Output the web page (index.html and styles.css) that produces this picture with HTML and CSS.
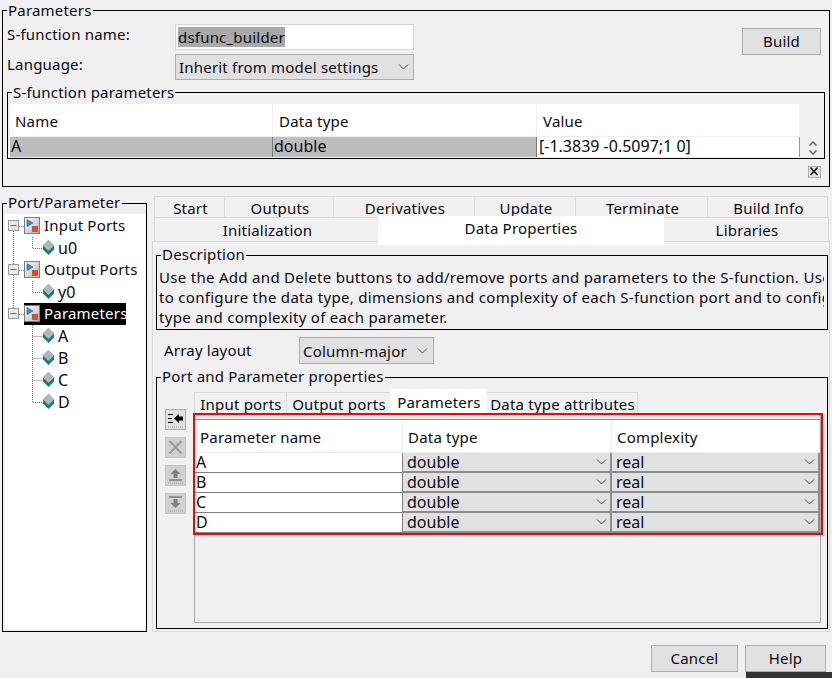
FILE: index.html
```html
<!DOCTYPE html>
<html lang="en">
<head>
<meta charset="utf-8">
<title>S-Function Builder</title>
<link rel="stylesheet" href="styles.css">
</head>
<body>
<svg class="defs" width="0" height="0" aria-hidden="true">
  <defs>
    <linearGradient id="boxfill" x1="0" y1="0" x2="1" y2="1"><stop offset="0" stop-color="#fff"/><stop offset="1" stop-color="#b4b4b4"/></linearGradient>
    <symbol id="expander" viewBox="0 0 19 22">
      <rect x="3.5" y="5.5" width="10" height="10" fill="#e9e9ec" stroke="#9a9a9a"/>
      <path d="M5.5 10.5h6" stroke="#4a6aa8" stroke-width="1"/>
      <path d="M14 11.5h5" stroke="#777" stroke-dasharray="1 1"/>
    </symbol>
    <symbol id="block" viewBox="0 0 16 18">
      <rect x=".5" y=".5" width="15" height="16" fill="url(#boxfill)" stroke="#7c7c7c"/>
      <path d="M3 2.500l6 3.500-6 3.500z" fill="#3b8fd6" stroke="#1d5f9c" stroke-width=".6"/>
      <rect x="8.500" y="9.500" width="5" height="5" fill="#e0501c" stroke="#a83a10" stroke-width=".6"/>
    </symbol>
    <symbol id="diamond" viewBox="0 0 11 15">
      <path d="M5.5 0L11 5.500V9.500L5.500 15L0 9.500V5.500z" fill="#0f8082"/>
      <path d="M5.500 0L11 5.500L5.500 11L0 5.500z" fill="#b5b5b5"/>
    </symbol>
  </defs>
</svg>

<fieldset class="group group-params">
  <legend class="group-title">Parameters</legend>
  <div class="form-grid">
    <span class="form-label form-label-name">S-function name:</span>
    <div class="text-field"><span class="selected-text">dsfunc_builder</span></div>
    <button class="btn btn-build">Build</button>
    <span class="form-label form-label-lang">Language:</span>
    <div class="combo combo-lang"><span>Inherit from model settings</span>
      <svg class="chev" width="11" height="6" viewBox="0 0 11 6"><path d="M1 .5l4.500 4.500L10 .5" fill="none" stroke="#555"/></svg>
    </div>
  </div>
  <fieldset class="group group-sfp">
    <legend class="group-title">S-function parameters</legend>
    <div class="sfp-table">
      <div class="sfp-head">Name</div>
      <div class="sfp-head">Data type</div>
      <div class="sfp-head">Value</div>
      <div class="sfp-spacer"></div>
      <div class="sfp-cell sfp-sel">A</div>
      <div class="sfp-cell sfp-sel">double</div>
      <div class="sfp-cell sfp-val">[-1.3839 -0.5097;1 0]</div>
      <div class="sfp-spin">
        <svg width="10" height="16" viewBox="0 0 10 16"><path d="M1.500 5.500L5 2l3.500 3.500M1.500 10.500L5 14l3.500-3.500" fill="none" stroke="#666" stroke-width="1.500"/></svg>
      </div>
    </div>
  </fieldset>
  <div class="close-row">
    <span class="close-box"><svg width="12" height="11" viewBox="0 0 12 11"><path d="M2.500 1.500l7 7.500M9.500 1.500l-7 7.500" stroke="#000" stroke-width="1.400"/></svg></span>
  </div>
</fieldset>

<main class="main">
  <fieldset class="group group-tree">
    <legend class="group-title">Port/Parameter</legend>
    <div class="tree">
      <div class="tree-row">
        <svg class="gutter" width="19" height="22"><path d="M8.500 16V22" stroke="#777" stroke-dasharray="1 1"/><use href="#expander" width="19" height="22"/></svg>
        <span class="node"><svg class="node-ico" width="16" height="18"><use href="#block"/></svg><span class="node-text">Input Ports</span></span>
      </div>
      <div class="tree-row">
        <svg class="gutter-child" width="53" height="22"><path d="M8.500 0V22M27.500 0V11.500H38" fill="none" stroke="#777" stroke-dasharray="1 1"/><use href="#diamond" x="38" y="3" width="11" height="15"/></svg>
        <span class="leaf-text">u0</span>
      </div>
      <div class="tree-row">
        <svg class="gutter" width="19" height="22"><path d="M8.500 0V5M8.500 16V22" stroke="#777" stroke-dasharray="1 1"/><use href="#expander" width="19" height="22"/></svg>
        <span class="node"><svg class="node-ico" width="16" height="18"><use href="#block"/></svg><span class="node-text">Output Ports</span></span>
      </div>
      <div class="tree-row">
        <svg class="gutter-child" width="53" height="22"><path d="M8.500 0V22M27.500 0V11.500H38" fill="none" stroke="#777" stroke-dasharray="1 1"/><use href="#diamond" x="38" y="3" width="11" height="15"/></svg>
        <span class="leaf-text">y0</span>
      </div>
      <div class="tree-row">
        <svg class="gutter" width="19" height="22"><path d="M8.500 0V5" stroke="#777" stroke-dasharray="1 1"/><use href="#expander" width="19" height="22"/></svg>
        <span class="node node-selected"><svg class="node-ico" width="16" height="18"><use href="#block"/></svg><span class="node-text">Parameters</span></span>
      </div>
      <div class="tree-row">
        <svg class="gutter-child" width="53" height="22"><path d="M27.500 0V22M27.500 11.500H38" fill="none" stroke="#777" stroke-dasharray="1 1"/><use href="#diamond" x="38" y="3" width="11" height="15"/></svg>
        <span class="leaf-text">A</span>
      </div>
      <div class="tree-row">
        <svg class="gutter-child" width="53" height="22"><path d="M27.500 0V22M27.500 11.500H38" fill="none" stroke="#777" stroke-dasharray="1 1"/><use href="#diamond" x="38" y="3" width="11" height="15"/></svg>
        <span class="leaf-text">B</span>
      </div>
      <div class="tree-row">
        <svg class="gutter-child" width="53" height="22"><path d="M27.500 0V22M27.500 11.500H38" fill="none" stroke="#777" stroke-dasharray="1 1"/><use href="#diamond" x="38" y="3" width="11" height="15"/></svg>
        <span class="leaf-text">C</span>
      </div>
      <div class="tree-row">
        <svg class="gutter-child" width="53" height="22"><path d="M27.500 0V11.500H38" fill="none" stroke="#777" stroke-dasharray="1 1"/><use href="#diamond" x="38" y="3" width="11" height="15"/></svg>
        <span class="leaf-text">D</span>
      </div>
    </div>
  </fieldset>

  <section class="tabs-area">
    <div class="tab-row tab-row-top">
      <div class="tab tab-start">Start</div>
      <div class="tab tab-outputs">Outputs</div>
      <div class="tab tab-deriv">Derivatives</div>
      <div class="tab tab-update">Update</div>
      <div class="tab tab-term">Terminate</div>
      <div class="tab tab-info">Build Info</div>
    </div>
    <div class="tab-row tab-row-bottom">
      <div class="tab tab-init">Initialization</div>
      <div class="tab tab-data tab-active">Data Properties</div>
      <div class="tab tab-libs">Libraries</div>
    </div>
    <div class="tab-panel">
      <fieldset class="group group-desc">
        <legend class="group-title">Description</legend>
        <div class="desc-text">
          <div>Use the Add and Delete buttons to add/remove ports and parameters to the S-function. Use the table</div>
          <div>to configure the data type, dimensions and complexity of each S-function port and to configure the data</div>
          <div>type and complexity of each parameter.</div>
        </div>
      </fieldset>
      <div class="array-row">
        <span class="array-label">Array layout</span>
        <div class="combo combo-array"><span>Column-major</span>
          <svg class="chev" width="11" height="6" viewBox="0 0 11 6"><path d="M1 .5l4.500 4.500L10 .5" fill="none" stroke="#555"/></svg>
        </div>
      </div>
      <fieldset class="group group-ports">
        <legend class="group-title">Port and Parameter properties</legend>
        <div class="ports-body">
          <div class="tool-col">
            <span class="tool tool-on"><svg width="19" height="19" viewBox="0 0 19 19"><path d="M2 4.500h5M2 8.500h4M2 12.500h5" stroke="#000" stroke-width="1.200"/><path d="M8 8.500l5-4.500v2.500h4v4h-4v2.500z" fill="#000"/><path d="M2 17h15" stroke="#999" stroke-dasharray="1 1"/></svg></span>
            <span class="tool"><svg width="19" height="19" viewBox="0 0 19 19"><path d="M3.500 3l12 12.500M15.500 3l-12 12.500" stroke="#9a9a9a" stroke-width="2"/></svg></span>
            <span class="tool"><svg width="19" height="19" viewBox="0 0 19 19"><path d="M9.500 3l5 5h-3v4h-4V8h-3z" fill="#7f7f7f"/><path d="M3 14h13" stroke="#7f7f7f" stroke-width="1.500"/><path d="M2 17h15" stroke="#a0a0a0" stroke-dasharray="1 1"/></svg></span>
            <span class="tool"><svg width="19" height="19" viewBox="0 0 19 19"><path d="M3 3h13" stroke="#7f7f7f" stroke-width="1.500"/><path d="M7.500 5h4v4h3l-5 5-5-5h3z" fill="#7f7f7f"/><path d="M2 17h15" stroke="#a0a0a0" stroke-dasharray="1 1"/></svg></span>
          </div>
          <div class="ports-main">
            <div class="sub-tabs">
              <div class="sub-tab sub-input">Input ports</div>
              <div class="sub-tab sub-output">Output ports</div>
              <div class="sub-tab sub-param sub-active">Parameters</div>
              <div class="sub-tab sub-attr">Data type attributes</div>
            </div>
            <div class="sub-panel">
              <div class="param-table">
                <div class="param-head">Parameter name</div>
                <div class="param-head">Data type</div>
                <div class="param-head">Complexity</div>

                <div class="param-name">A</div>
                <div class="param-combo"><span>double</span><svg class="chev" width="11" height="6" viewBox="0 0 11 6"><path d="M1 .5l4.500 4.500L10 .5" fill="none" stroke="#555"/></svg></div>
                <div class="param-combo"><span>real</span><svg class="chev" width="11" height="6" viewBox="0 0 11 6"><path d="M1 .5l4.500 4.500L10 .5" fill="none" stroke="#555"/></svg></div>

                <div class="param-name">B</div>
                <div class="param-combo"><span>double</span><svg class="chev" width="11" height="6" viewBox="0 0 11 6"><path d="M1 .5l4.500 4.500L10 .5" fill="none" stroke="#555"/></svg></div>
                <div class="param-combo"><span>real</span><svg class="chev" width="11" height="6" viewBox="0 0 11 6"><path d="M1 .5l4.500 4.500L10 .5" fill="none" stroke="#555"/></svg></div>

                <div class="param-name">C</div>
                <div class="param-combo"><span>double</span><svg class="chev" width="11" height="6" viewBox="0 0 11 6"><path d="M1 .5l4.500 4.500L10 .5" fill="none" stroke="#555"/></svg></div>
                <div class="param-combo"><span>real</span><svg class="chev" width="11" height="6" viewBox="0 0 11 6"><path d="M1 .5l4.500 4.500L10 .5" fill="none" stroke="#555"/></svg></div>

                <div class="param-name">D</div>
                <div class="param-combo"><span>double</span><svg class="chev" width="11" height="6" viewBox="0 0 11 6"><path d="M1 .5l4.500 4.500L10 .5" fill="none" stroke="#555"/></svg></div>
                <div class="param-combo"><span>real</span><svg class="chev" width="11" height="6" viewBox="0 0 11 6"><path d="M1 .5l4.500 4.500L10 .5" fill="none" stroke="#555"/></svg></div>
              </div>
              <div class="red-mark"></div>
            </div>
          </div>
        </div>
      </fieldset>
    </div>
  </section>
</main>

<footer class="footer">
  <button class="btn btn-cancel">Cancel</button>
  <button class="btn btn-help">Help</button>
</footer>
<div class="taskbar-sliver"></div>
</body>
</html>
```
FILE: styles.css
```css
* { box-sizing: border-box; }
html, body { margin: 0; padding: 0; }
body {
  width: 832px; height: 678px; overflow: hidden;
  background: #f0f0f0; color: #0a0a14;
  font: 15px/20px "Noto Sans", "Open Sans", sans-serif;
  letter-spacing: .2px;
}
.defs { position: absolute; }

.group { margin: 0; padding: 0; border: 1px solid #000; min-width: 0; }
.group-title { padding: 0 1px; margin-left: 4px; height: 20px; line-height: 20px; }
.group-tree .group-title, .group-desc .group-title, .group-ports .group-title { line-height: 18px; }

/* Parameters */
.group-params { margin: 0 2px; height: 187px; }
.form-grid {
  display: grid;
  grid-template-columns: 172px 239px 1fr;
  grid-template-rows: 26px 26px;
  row-gap: 4px;
  margin-top: 4px;
}
.form-label { padding-left: 4px; align-self: start; }
.text-field { background: #fff; border: 1px solid #d4d4d4; padding: 2px; height: 26px; }
.selected-text { display: inline-block; background: #a9a9a9; height: 20px; line-height: 20px; }
.btn {
  font: inherit; letter-spacing: inherit; color: inherit; background: #e1e1e1; border: 1px solid #adadad;
  padding: 0 0 2px; height: 27px;
}
.btn-build { grid-column: 3; grid-row: 1 / span 2; width: 79px; justify-self: end; align-self: start; margin: 4px 8px 0 0; }
.combo {
  display: flex; align-items: center; justify-content: space-between;
  background: #e1e1e1; border: 1px solid #adadad;
}
.combo-lang { height: 26px; padding: 0 4px 0 3px; grid-column: 2; }
.chev { flex: none; }

.group-sfp { margin: 2px 4px 0; height: 77px; }
.sfp-table {
  display: grid;
  grid-template-columns: 263px 264px 262px 1fr;
  grid-template-rows: 32px 20px;
  margin: 2px 0 0 2px;
}
.sfp-head { background: #fff; padding: 7px 0 0 5px; border-right: 1px solid #efefef; border-bottom: 1px solid #efefef; height: 33px; }
.sfp-spacer { height: 33px; }
.sfp-head:nth-child(2), .sfp-head:nth-child(3) { padding-left: 6px; }
.sfp-head:nth-child(3) { border-right: 0; }
.sfp-cell { height: 20px; margin-top: 1px; font-size: 16px; letter-spacing: 0; line-height: 18px; padding-left: 1px; border-right: 1px solid #787878; }
.sfp-sel { background: #bdbdbd; }
.sfp-val { background: #fff; border-right-color: #9a9a9a; width: 263px; padding-left: 2px; }
.sfp-spin { margin: 4px 0 0 9px; }
.sfp-spin svg { display: block; }

.close-row { display: flex; justify-content: flex-end; margin: 7px 8px 0 0; }
.close-box { display: block; width: 13px; height: 12px; background: #e1e1e1; border: 1px solid #adadad; line-height: 0; }
.close-box svg { margin: -1px 0 0 -1px; }

/* Main split */
.main { display: flex; gap: 5px; margin: 6px 2px 0; }
.group-tree { flex: none; width: 145px; height: 439px; }
.tree { margin: 1px 1px 2px 2px; height: 415px; background: #fff; padding-top: 1px; }
.tree-row { display: flex; height: 22px; align-items: center; }
.gutter, .gutter-child { flex: none; }
.node { display: flex; align-items: center; height: 22px; }
.node-ico { flex: none; }
.node-text { margin-left: 4px; padding-bottom: 2px; }
.node-selected { background: #000; color: #fff; width: 102px; }
.leaf-text { font-size: 16px; letter-spacing: 0; }

/* Tabs */
.tabs-area { flex: none; width: 678px; margin-top: 3px; }
.tab-row { display: flex; margin-left: 2px; width: 674px; }
.tab { border: 1px solid #dadada; border-bottom: 0; text-align: center; background: #f0f0f0; margin-right: -1px; }
.tab-row-top { height: 21px; }
.tab-row-top .tab { height: 21px; line-height: 22px; overflow: hidden; padding-left: 2px; }
.tab-row-bottom { height: 24px; }
.tab-row-bottom .tab { height: 24px; line-height: 24px; border-top: 1px solid #dadada; padding-left: 2px; }
.tab-start { width: 71px; } .tab-outputs { width: 110px; } .tab-deriv { width: 142px; }
.tab-update { width: 102px; } .tab-term { width: 133px; } .tab-info { width: 121px; }
.tab-init { width: 225px; } .tab-data { width: 286px; } .tab-libs { width: 166px; }
.tab-row-bottom .tab-active {
  position: relative; z-index: 1;
  height: 29px; margin-top: -1px; background: #fff; line-height: 24px; border: 0; padding-left: 0;
}
.tab-panel { height: 391px; border: 1px solid #dadada; padding-top: 3px; }

.group-desc { margin: 0 1px 0 3px; height: 85px; }
.desc-text { margin: 2px 3px 0 2px; overflow: hidden; white-space: nowrap; letter-spacing: .3px; }
.array-row { display: flex; align-items: center; height: 27px; margin-top: 7px; padding-left: 11px; }
.array-label { width: 135px; padding-bottom: 2px; }
.combo-array { width: 135px; height: 27px; padding: 0 5px 0 3px; }

.group-ports { margin: 3px 1px 0 3px; height: 262px; }
.ports-body { display: flex; gap: 8px; padding-left: 8px; }
.tool-col { display: flex; flex-direction: column; gap: 7px; margin-top: 22px; flex: none; }
.tool { display: block; width: 21px; height: 21px; background: #d0d0d0; border: 1px solid #c4c4c4; line-height: 0; }
.tool-on { background: #e1e1e1; border-color: #adadad; }
.ports-main { width: 627px; margin-top: 2px; }
.sub-tabs { display: flex; align-items: flex-end; height: 25px; }
.sub-tab { height: 22px; line-height: 22px; border: 1px solid #dadada; border-bottom: 0; text-align: center; margin-right: -1px; white-space: nowrap; overflow: hidden; padding-left: 1px; }
.sub-input { width: 93px; } .sub-output { width: 105px; } .sub-attr { width: 152px; }
.sub-param { width: 97px; }
.sub-active { position: relative; z-index: 1; height: 26px; margin-bottom: -1px; background: #fff; line-height: 26px; border: 0; }
.sub-panel { position: relative; height: 209px; border: 1px solid #a6a6a6; padding-top: 4px; }
.param-table {
  display: grid;
  grid-template-columns: 208px 209px 208px;
  grid-template-rows: 33px repeat(4, 20px);
  border-top: 1px solid #8a8a8f;
}
.param-head { background: #fff; height: 33px; padding: 7px 0 0 5px; border-right: 1px solid #eee; border-bottom: 1px solid #eee; }
.param-name { background: #fff; height: 20px; font-size: 16px; letter-spacing: 0; line-height: 19px; padding-left: 1px; border-bottom: 1px solid #808080; border-right: 1px solid #808080; }
.param-combo {
  display: flex; align-items: center; justify-content: space-between;
  height: 20px; background: #e1e1e1; padding: 0 3px 0 4px;
  font-size: 16px; letter-spacing: 0;
  border-right: 2px solid #8c8c8c; border-bottom: 2px solid #8c8c8c;
}
.red-mark { position: absolute; left: -2px; top: -2px; width: 630px; height: 122px; border: 2px solid #f00; z-index: 2; }

/* Footer */
.footer { display: flex; justify-content: flex-end; gap: 7px; margin-top: 13px; padding-right: 6px; }
.btn-cancel { width: 87px; }
.btn-help { width: 81px; }
.taskbar-sliver { height: 6px; margin-left: 746px; background: #333; }
```
